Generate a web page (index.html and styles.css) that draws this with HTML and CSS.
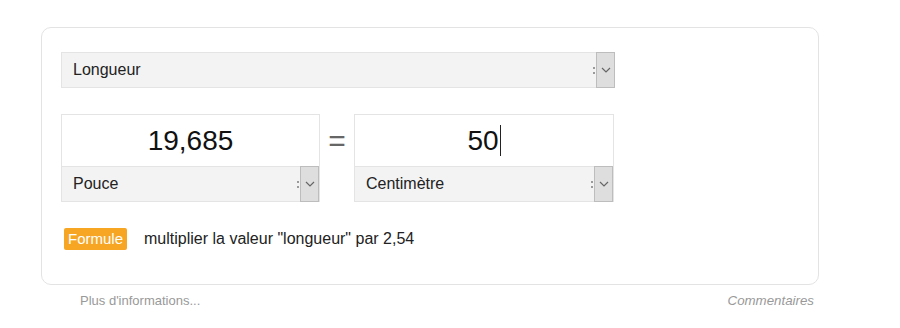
FILE: index.html
```html
<!DOCTYPE html>
<html lang="fr">
<head>
<meta charset="utf-8">
<link rel="stylesheet" href="styles.css">
</head>
<body>
<div class="page">
  <div class="card">
    <div class="select select-main">
      <span class="select-label">Longueur</span>
      <span class="spin"><i></i><i></i></span>
      <span class="drop"><svg width="10" height="6" viewBox="0 0 10 6"><polyline points="1,1 5,5 9,1" fill="none" stroke="#666" stroke-width="1.2"/></svg></span>
    </div>
    <div class="convert">
      <div class="box">
        <div class="value">19,685</div>
        <div class="select select-unit">
          <span class="select-label">Pouce</span>
          <span class="spin"><i></i><i></i></span>
          <span class="drop"><svg width="10" height="6" viewBox="0 0 10 6"><polyline points="1,1 5,5 9,1" fill="none" stroke="#666" stroke-width="1.2"/></svg></span>
        </div>
      </div>
      <div class="equals">=</div>
      <div class="box">
        <div class="value">50<span class="caret"></span></div>
        <div class="select select-unit">
          <span class="select-label">Centimètre</span>
          <span class="spin"><i></i><i></i></span>
          <span class="drop"><svg width="10" height="6" viewBox="0 0 10 6"><polyline points="1,1 5,5 9,1" fill="none" stroke="#666" stroke-width="1.2"/></svg></span>
        </div>
      </div>
    </div>
    <div class="formula">
      <span class="badge">Formule</span>
      <span class="formula-text">multiplier la valeur "longueur" par 2,54</span>
    </div>
  </div>
  <div class="footer">
    <span class="more">Plus d'informations...</span>
    <span class="feedback">Commentaires</span>
  </div>
</div>
</body>
</html>
```
FILE: styles.css
```css
* { box-sizing: border-box; }
html, body { margin: 0; padding: 0; background: #fff; }
body { font-family: "Liberation Sans", Arial, sans-serif; color: #222; }

.page { padding: 27px 0 0 41px; width: 819px; }

.card {
  border: 1px solid #e3e3e3;
  border-radius: 10px;
  padding: 24px 19px 34px 19px;
  height: 258px;
}

.select {
  display: flex;
  align-items: center;
  background: #f3f3f3;
  border: 1px solid #e4e4e4;
  position: relative;
}
.select-main { width: 554px; height: 36px; }
.select-label { flex: 1; padding-left: 11px; font-size: 16px; color: #222; }

.spin { display: flex; flex-direction: column; gap: 3px; margin-right: 1px; }
.spin i { display: block; width: 2px; height: 2px; background: #9a9a9a; }

.drop {
  width: 19px;
  align-self: stretch;
  margin: -1px -1px -1px 0;
  background: #dedede;
  border: 1px solid #bdbdbd;
  display: flex;
  align-items: center;
  justify-content: center;
}

.convert { display: flex; align-items: flex-start; margin-top: 26px; }
.box { width: 259px; border: 1px solid #e4e4e4; border-bottom: none; }
.box + .equals + .box { width: 260px; }
.value {
  height: 51px;
  display: flex;
  align-items: center;
  justify-content: center;
  font-size: 28px;
  color: #111;
  background: #fff;
}
.caret { display: inline-block; width: 1px; height: 31px; background: #222; margin-left: 1px; }
.select-unit { height: 36px; border-left: none; border-right: none; margin-bottom: 0; }
.select-unit .drop { margin-right: 0; }

.equals {
  width: 34px;
  text-align: center;
  font-size: 30px;
  color: #666;
  line-height: 30px;
  padding-top: 12px;
}

.formula { display: flex; align-items: center; margin-top: 26px; padding-left: 3px; }
.badge {
  background: #f6a623;
  color: #fff;
  font-size: 15px;
  line-height: 22px;
  height: 22px;
  padding: 0 4px;
  border-radius: 2px;
}
.formula-text { margin-left: 17px; font-size: 16px; color: #222; }

.footer {
  display: flex;
  justify-content: space-between;
  padding: 8px 5px 0 39px;
  font-size: 13px;
  color: #999;
  width: 778px;
}
.feedback { font-style: italic; font-size: 13.3px; }
```
